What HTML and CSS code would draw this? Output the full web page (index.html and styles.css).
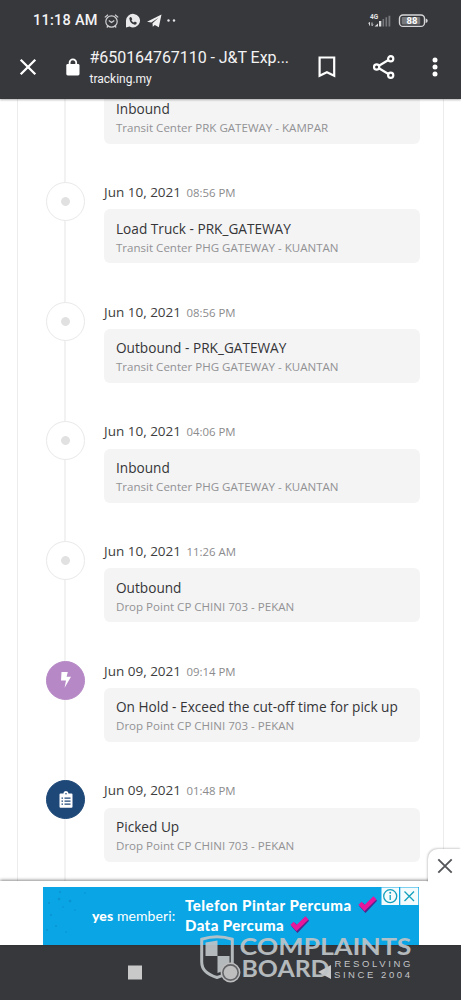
FILE: index.html
```
<!DOCTYPE html>
<html lang="en">
<head>
<meta charset="utf-8">
<title>#650164767110 - J&amp;T Express</title>
<link rel="stylesheet" href="styles.css">
</head>
<body>
<div class="phone">
  <header class="top">
    <div class="status">
      <span class="clock">11:18 AM</span>
      <svg class="status-icons" width="82" height="18" viewBox="0 0 82 18">
        <g fill="none" stroke="#d0d0d2" stroke-width="1.2"><circle cx="9.5" cy="9.5" r="5.7"/><path d="M2.8 5.4 6 2.8M16.2 5.4 13 2.8M4.8 15.5l1.5-1.8M14.2 15.5l-1.5-1.8M6.8 8.5l2.7 2 2.8-2"/></g>
        <path fill="#e9e9eb" d="M24 15.6V9a7 6.800 0 1 1 3.600 5.600z"/>
        <path fill="#37383c" d="M27.300 6.200q1.200-2.200 2.200-.6l.8 1.600-.9 1.100q.9 1.700 2.500 2.300l1-1 2 1.100q-.4 2.400-2.700 1.900-4.200-1.100-4.900-6.400z"/>
        <path fill="#f1f1f2" d="M45 9.800 59.500 2.600l-2.700 12.700-4-2.400-2 1.800-.3-3.400 6-5.500-7.200 4.800z"/>
        <circle cx="66.500" cy="8.500" r="1.200" fill="#e5e5e7"/><circle cx="72" cy="8.500" r="1.200" fill="#e5e5e7"/>
      </svg>
      <svg class="signal" width="64" height="18" viewBox="0 0 64 18">
        <text class="net" x="3" y="6.500">4G</text>
        <path stroke="#d5d5d7" fill="none" d="M2.500 10.500v3M1.500 11.500l1-1.300M5 13.500v-3M6 12.500l-1 1.300"/>
        <path fill="#dededf" d="M7.500 14.500 11 11.500v3zM12 9h2.300v5.500H12z"/>
        <path fill="#77787b" d="M15.500 7h1.600v7.500h-1.600zM18.500 5.300h1.600v9.200h-1.600zM21.500 3.800h1.800v10.700h-1.800z"/>
        <rect x="32.500" y="3" width="25" height="11.400" rx="3.500" fill="none" stroke="#d6d6d8" stroke-width="1.400"/>
        <rect x="34.700" y="5" width="18.500" height="7.400" rx="1" fill="#77787b"/>
        <path fill="#d6d6d8" d="M58.700 6.500q2 .3 2 2.200t-2 2.300z"/>
        <text class="charge" x="39.500" y="12.300">88</text>
      </svg>
    </div>
    <div class="bar">
      <svg class="close" width="18" height="18" viewBox="0 0 18 18"><path d="M1.700 1.700l14.600 14.600M16.300 1.700 1.700 16.300" stroke="#fff" stroke-width="2.300" fill="none"/></svg>
      <svg class="lock" width="14" height="18" viewBox="0 0 14 18"><rect x=".3" y="6" width="13.200" height="11.500" rx="1.400" fill="#fff"/><path d="M3.600 7V4.600a3.300 3.300 0 0 1 6.600 0V7" fill="none" stroke="#fff" stroke-width="1.800"/></svg>
      <div class="site"><div class="page-title">#650164767110 - J&amp;T Exp...</div><div class="host">tracking.my</div></div>
      <svg class="bookmark" width="18" height="22" viewBox="0 0 18 22"><path d="M1.600 1.500h14.600v18.200L8.900 16.300l-7.300 3.400z" fill="none" stroke="#fff" stroke-width="2.200"/></svg>
      <svg class="share" width="22" height="24" viewBox="0 0 22 24"><path d="M17.500 3.800 3.800 12l13.700 8.200" fill="none" stroke="#fff" stroke-width="2.200"/><g fill="#37383c" stroke="#fff" stroke-width="2.200"><circle cx="17.700" cy="3.800" r="2.600"/><circle cx="3.600" cy="12" r="2.600"/><circle cx="17.700" cy="20.300" r="2.600"/></g></svg>
      <svg class="more" width="6" height="20" viewBox="0 0 6 20"><g fill="#fff"><circle cx="3" cy="3" r="2.500"/><circle cx="3" cy="10" r="2.500"/><circle cx="3" cy="17" r="2.500"/></g></svg>
    </div>
  </header>

  <main class="content">
    <ol class="timeline">
      <li class="event"><div class="rail"></div><div class="info"><div class="when"></div><div class="card"><div class="what">Inbound</div><div class="where">Transit Center PRK GATEWAY - KAMPAR</div></div></div></li>
      <li class="event"><div class="rail"><span class="dot"></span></div><div class="info"><div class="when">Jun 10, 2021 <time>08:56 PM</time></div><div class="card"><div class="what">Load Truck - PRK_GATEWAY</div><div class="where">Transit Center PHG GATEWAY - KUANTAN</div></div></div></li>
      <li class="event"><div class="rail"><span class="dot"></span></div><div class="info"><div class="when">Jun 10, 2021 <time>08:56 PM</time></div><div class="card"><div class="what">Outbound - PRK_GATEWAY</div><div class="where">Transit Center PHG GATEWAY - KUANTAN</div></div></div></li>
      <li class="event"><div class="rail"><span class="dot"></span></div><div class="info"><div class="when">Jun 10, 2021 <time>04:06 PM</time></div><div class="card"><div class="what">Inbound</div><div class="where">Transit Center PHG GATEWAY - KUANTAN</div></div></div></li>
      <li class="event"><div class="rail"><span class="dot"></span></div><div class="info"><div class="when">Jun 10, 2021 <time>11:26 AM</time></div><div class="card"><div class="what">Outbound</div><div class="where">Drop Point CP CHINI 703 - PEKAN</div></div></div></li>
      <li class="event"><div class="rail"><span class="dot hold"><svg width="12" height="18" viewBox="0 0 12 18"><path fill="#fff" d="M1.500 1h6.300L6.600 5.800H11L4.600 16.700 6 9.500H1z"/></svg></span></div><div class="info"><div class="when">Jun 09, 2021 <time>09:14 PM</time></div><div class="card"><div class="what">On Hold - Exceed the cut-off time for pick up</div><div class="where">Drop Point CP CHINI 703 - PEKAN</div></div></div></li>
      <li class="event"><div class="rail"><span class="dot picked"><svg width="14" height="18" viewBox="0 0 14 18"><path fill="#fff" d="M1.500 2.500H4.500a2.500 2.500 0 0 1 5 0h3q1 0 1 1v12.300q0 1-1 1h-11q-1 0-1-1V3.500q0-1 1-1z"/><circle cx="7" cy="2.800" r=".8" fill="#1e4878"/><path stroke="#1e4878" stroke-width="1.200" d="M2.500 7.200H4M5.500 7.200h6M2.500 10.200H4M5.500 10.200h6M2.500 13.200H4M5.500 13.200h6"/></svg></span></div><div class="info"><div class="when">Jun 09, 2021 <time>01:48 PM</time></div><div class="card"><div class="what">Picked Up</div><div class="where">Drop Point CP CHINI 703 - PEKAN</div></div></div></li>
    </ol>
  </main>

  <section class="ad-slot">
    <button class="dismiss" aria-label="Close"><svg width="16" height="16" viewBox="0 0 16 16"><path d="M1.300 1.300l13.400 13.400M14.700 1.300 1.300 14.700" stroke="#55565a" stroke-width="1.900"/></svg></button>
    <div class="ad">
      <svg class="specks" width="49" height="57" viewBox="0 0 49 57"><g fill="#0a93d2"><circle cx="6" cy="16" r="1"/><circle cx="17" cy="5" r="1"/><circle cx="16" cy="12" r="1.300"/><circle cx="27" cy="14" r="1.300"/><circle cx="8" cy="28" r="1"/><circle cx="20" cy="20" r=".8"/><circle cx="4" cy="43" r="1"/><circle cx="13" cy="39" r="1"/><circle cx="32" cy="23" r=".8"/><circle cx="42" cy="6" r=".8"/><circle cx="23" cy="45" r=".8"/></g></svg>
      <div class="brand"><b>yes</b> memberi:</div>
      <div class="offer">
        <div class="line"><span class="offer-a">Telefon Pintar Percuma</span><svg width="21" height="18" viewBox="0 0 21 18"><path d="M4 9.300l4.500 5L18.300 4" fill="none" stroke="#4c278d" stroke-width="5"/><path d="M3 8.200l4.500 4.800L18 2.800" fill="none" stroke="#e6179b" stroke-width="4.500"/></svg></div>
        <div class="line"><span class="offer-b">Data Percuma</span><svg width="21" height="18" viewBox="0 0 21 18"><path d="M4 9.300l4.500 5L18.300 4" fill="none" stroke="#4c278d" stroke-width="5"/><path d="M3 8.200l4.500 4.800L18 2.800" fill="none" stroke="#e6179b" stroke-width="4.500"/></svg></div>
      </div>
      <svg class="choices" width="38" height="19" viewBox="0 0 38 19"><path fill="#f4fbfd" d="M.5.500h17.500v17.500H.500zM19.300.500h18v17.500h-18z"/><g fill="none" stroke="#12a0bd" stroke-width="1.300"><circle cx="9.200" cy="9.200" r="6.500"/><path d="M9.200 8v5M23.500 4.500l9.500 9.500M33 4.500 23.500 14"/></g><circle cx="9.200" cy="5.700" r="1" fill="#12a0bd"/></svg>
    </div>
  </section>

  <nav class="nav">
    <svg width="461" height="55" viewBox="0 0 461 55"><path fill="#c9c9ca" d="M128 20.500h14v14h-14zM331 20v14l-13-7z"/></svg>
  </nav>

  <svg class="watermark" width="230" height="55" viewBox="0 0 230 55">
    <path d="M11.700 7.300q15.300-5 30.600 0V30q0 11-15.300 15.500Q11.700 41 11.700 30z" fill="none" stroke="#bfc4c7" stroke-width="3"/>
    <path fill="#bfc4c7" d="M15.500 10.500 27.500 8.500v15.500H15.500zM27.500 24h12V31q-1 7-12 10z"/>
    <circle cx="40.500" cy="40.500" r="9.200" fill="#68696c" stroke="#cacacb" stroke-width="1.500"/><circle cx="40.500" cy="40.500" r="6.800" fill="#cacacb"/>
    <g class="mark-big"><text x="49.500" y="22.500" textLength="172" lengthAdjust="spacingAndGlyphs">COMPLAINTS</text><text x="51.500" y="45" textLength="88" lengthAdjust="spacingAndGlyphs">BOARD</text></g>
    <g class="mark-small"><text x="144.500" y="35" textLength="76">RESOLVING</text><text x="144" y="45.500" textLength="76">SINCE 2004</text></g>
  </svg>
</div>
</body>
</html>
```
FILE: styles.css
```
* { box-sizing: border-box; }
body { margin: 0; }
.phone { position: relative; width: 461px; height: 1000px; display: flex; flex-direction: column; overflow: hidden; background: #fff; font-family: "Open Sans", "Noto Sans", sans-serif; }
svg { display: block; flex: none; }

.top { height: 99px; flex: none; background: #37383c; color: #f3f3f4; font-family: Roboto, sans-serif; position: relative; box-shadow: 0 1px 2px rgba(0,0,0,.3); }
.status { display: flex; height: 42px; padding: 12px 30px 0 33px; }
.clock { font-size: 14.500px; line-height: 18px; font-weight: 500; width: 69px; letter-spacing: .25px; white-space: nowrap; }
.signal { margin-left: auto; }
.net { font: 700 6.5px Roboto, sans-serif; fill: #e4e4e5; }
.charge { font: 700 9.5px Roboto, sans-serif; fill: #fff; }
.bar { display: flex; height: 50px; align-items: center; padding-left: 19px; }
.close { margin-right: 29px; }
.site { width: 200px; margin-left: 9.500px; margin-right: 28px; white-space: nowrap; }
.page-title { font-size: 16px; line-height: 23px; letter-spacing: -.05px; }
.host { font-size: 12px; line-height: 18px; margin-top: 1px; }
.share { margin-left: 37px; }
.more { margin-left: 37px; }

.content { height: 782px; flex: none; overflow: hidden; margin: 0 17px; border: solid #ececed; border-width: 0 1px; }
.timeline { list-style: none; margin: -36.700px 0 0; padding: 0 23px 0 28px; }
.event { height: 119.670px; display: flex; }
.rail { width: 39px; margin-right: 19px; background: linear-gradient(#f2f2f3, #f2f2f3) 18px 0 / 2px 100% no-repeat; }
.event:last-child { height: 150px; }
.dot { width: 39px; height: 39px; border: 1px solid #e9e9ea; border-radius: 50%; background: radial-gradient(circle, #e1e1e2 4px, #fff 4.800px); display: flex; align-items: center; justify-content: center; }
.hold { background: #b689c6; border-color: #b689c6; }
.picked { background: #1e4878; border-color: #1e4878; }
.info { flex: 1; min-width: 0; }
.when { font-size: 13.500px; line-height: 20px; height: 27.300px; color: #3e3e40; white-space: nowrap; }
.when time { font-size: 11.400px; color: #8b8b8d; margin-left: 2px; }
.card { height: 54px; background: #f4f4f5; border-radius: 6px; padding: 9.500px 12px; white-space: nowrap; }
.what { font-size: 13.650px; line-height: 19px; color: #353537; }
.where { font-size: 11.560px; line-height: 19px; color: #929294; }

.ad-slot { position: relative; height: 64px; flex: none; background: #fff; padding: 6px 0 0 43px; box-shadow: 0 -1px 3px rgba(0,0,0,.45); }
.dismiss { position: absolute; right: 0; top: -32px; width: 33px; height: 34px; padding: 0; display: flex; align-items: center; justify-content: center; border: 0; border-radius: 10px 0 0; background: #fff; box-shadow: -1px -1px 2px rgba(0,0,0,.18); clip-path: inset(-3px 0 1px -3px); }
.ad { position: relative; width: 376px; height: 58px; background: #09a5e4; display: flex; color: #fff; font-family: Lato, sans-serif; white-space: nowrap; }
.brand { width: 93px; padding-top: 20px; font-size: 14px; line-height: 18px; letter-spacing: .1px; }
.brand b { font-weight: 900; }
.offer { padding-top: 8px; font-size: 15px; font-weight: 900; line-height: 20px; }
.line { display: flex; gap: 5px; height: 20px; }
.offer-a { letter-spacing: .5px; }
.offer-b { letter-spacing: .4px; }
.choices { position: absolute; right: 0; top: 0; }

.nav { height: 55px; background: #37383c; }
.watermark { position: absolute; left: 190px; top: 932px; opacity: .92; }
.mark-big { font: 700 23.500px Lato, sans-serif; fill: #bfc4c7; }
.mark-small { font: 400 9.500px "Liberation Sans", sans-serif; fill: #d0d2d4; }
```
